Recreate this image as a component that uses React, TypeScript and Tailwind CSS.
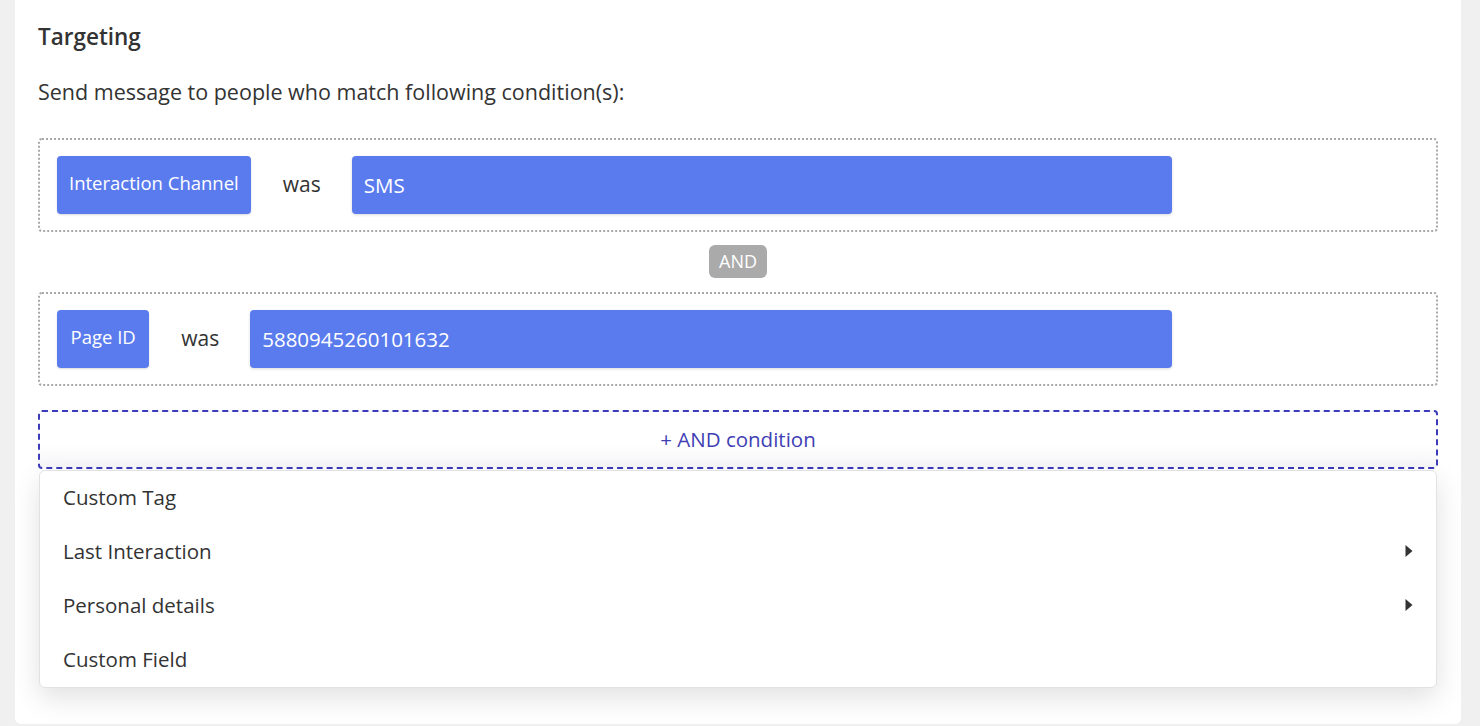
const menuItems = [
    { label: 'Custom Tag', sub: false },
    { label: 'Last Interaction', sub: true },
    { label: 'Personal details', sub: true },
    { label: 'Custom Field', sub: false },
]

function Caret() {
    return (
        <svg width="8" height="12" viewBox="0 0 8 12" className="text-[#333]">
            <path d="M0.5 0 L7.5 6 L0.5 12 Z" fill="currentColor" />
        </svg>
    )
}

function ConditionRow({ field, value, chipClass }: { field: string; value: string; chipClass: string }) {
    return (
        <div className="border-2 border-dotted border-[#a9a9a9] rounded-[4px] px-[17px] py-[16px]">
            <div className="flex items-center w-[1115px]">
                <div className={`h-[58px] flex items-center pb-[4px] bg-[#5a7bee] rounded-[4px] text-white text-[18.5px] shadow-[0_1px_2px_rgba(0,0,0,0.15)] whitespace-nowrap ${chipClass}`}>
                    {field}
                </div>
                <span className="text-[21px] text-[#333] ml-8 mr-[31px]">was</span>
                <div className="h-[58px] flex-1 flex items-center px-3 bg-[#5a7bee] rounded-[4px] text-white text-[20.5px] shadow-[0_1px_3px_rgba(0,0,0,0.15)]">
                    {value}
                </div>
            </div>
        </div>
    )
}

export default function App() {
    return (
        <div className="min-h-[726px] bg-[#f0f0f0] pl-[15px] pr-[19px] font-['Open_Sans',sans-serif]">
            <div className="bg-white rounded-b-[6px] h-[724px] px-[23px] pt-[22px]">
                <h2 className="text-[22.5px] font-semibold text-[#333] leading-[30px]">Targeting</h2>
                <p className="text-[21.5px] text-[#333] mt-[26px] leading-[28px]">
                    Send message to people who match following condition(s):
                </p>

                <div className="mt-[32px]">
                    <ConditionRow field="Interaction Channel" value="SMS" chipClass="px-3" />
                </div>

                <div className="flex justify-center mt-[13px]">
                    <span className="h-[33px] px-[10px] flex items-center bg-[#aaaaaa] rounded-[6px] text-white text-[18px]">
                        AND
                    </span>
                </div>

                <div className="mt-[14px]">
                    <ConditionRow field="Page ID" value="5880945260101632" chipClass="px-[13.5px]" />
                </div>

                <div className="relative mt-[24px]">
                    <button className="w-full h-[59px] border-2 border-dashed border-[#3c3cbb] rounded-[4px] bg-gradient-to-b from-white from-60% to-[#f6f6f8] text-[20.5px] text-[#4040b4]">
                        + AND condition
                    </button>
                    <div className="absolute left-px right-px top-[60px] bg-white border border-[#e2e2e6] rounded-[6px] shadow-[0_10px_28px_rgba(0,0,0,0.12)]">
                        {menuItems.map((item) => (
                            <div
                                key={item.label}
                                className="h-[54px] flex items-center justify-between pl-[23px] pr-[23px] pb-[2px] text-[20.5px] text-[#333]"
                            >
                                <span>{item.label}</span>
                                {item.sub && <Caret />}
                            </div>
                        ))}
                    </div>
                </div>
            </div>
        </div>
    )
}
